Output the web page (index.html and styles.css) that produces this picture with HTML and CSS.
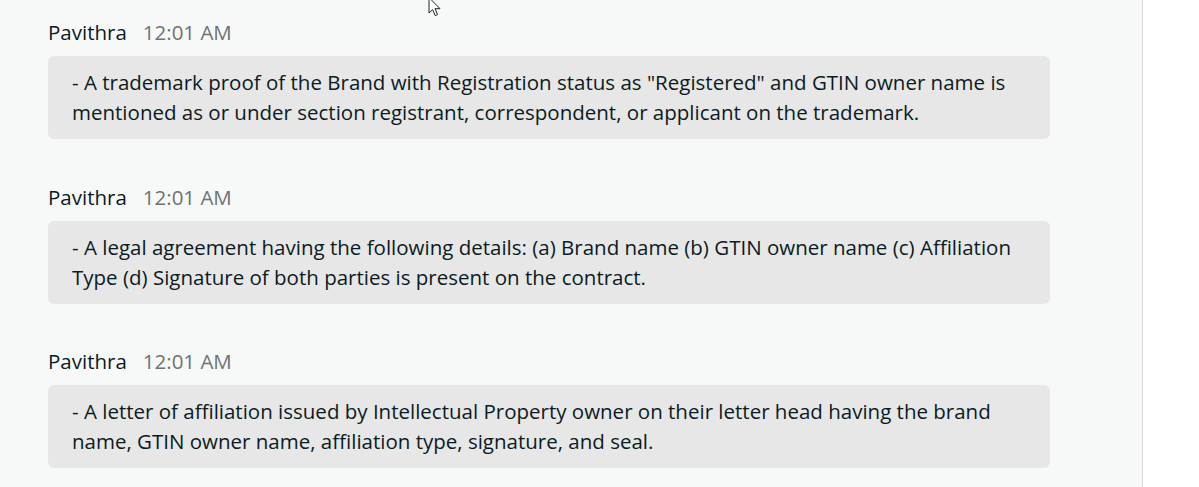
FILE: index.html
```html
<!DOCTYPE html>
<html lang="en">
<head>
<meta charset="utf-8">
<title>Messages</title>
<link rel="stylesheet" href="styles.css">
</head>
<body>
<div class="layout">
  <main class="thread">
    <section class="message">
      <div class="meta"><span class="author">Pavithra</span><span class="time">12:01 AM</span></div>
      <div class="bubble">- A trademark proof of the Brand with Registration status as "Registered" and GTIN owner name is<br>mentioned as or under section registrant, correspondent, or applicant on the trademark.</div>
    </section>
    <section class="message">
      <div class="meta"><span class="author">Pavithra</span><span class="time">12:01 AM</span></div>
      <div class="bubble">- A legal agreement having the following details: (a) Brand name (b) GTIN owner name (c) Affiliation<br>Type (d) Signature of both parties is present on the contract.</div>
    </section>
    <section class="message">
      <div class="meta"><span class="author">Pavithra</span><span class="time">12:01 AM</span></div>
      <div class="bubble">- A letter of affiliation issued by Intellectual Property owner on their letter head having the brand<br>name, GTIN owner name, affiliation type, signature, and seal.</div>
    </section>
  </main>
  <aside class="side"></aside>
</div>
<svg class="cursor" width="14" height="22" viewBox="0 0 14 22" xmlns="http://www.w3.org/2000/svg">
  <path d="M1 0.5 L1 16 L4.6 12.6 L7.2 18.6 L9.6 17.6 L7 11.7 L12 11.7 Z" fill="#fff" stroke="#222" stroke-width="1" stroke-linejoin="round"/>
</svg>
</body>
</html>
```
FILE: styles.css
```css
html, body {
  margin: 0;
  padding: 0;
  height: 100%;
}
body {
  font-family: "Open Sans", "Noto Sans", sans-serif;
  color: #0c1b1f;
  background: #fff;
  overflow: hidden;
}
.layout {
  display: flex;
  height: 100%;
}
.thread {
  width: 1143px;
  flex: none;
  background: #f7f8f8;
  border-right: 1px solid #d5d9d9;
  padding: 20px 0 0 48px;
  box-sizing: border-box;
  display: flex;
  flex-direction: column;
  gap: 45.5px;
}
.side {
  flex: 1;
  background: #fff;
}
.meta {
  display: flex;
  align-items: center;
  gap: 16px;
  height: 24px;
  margin-bottom: 12px;
  font-size: 20.5px;
}
.author {
  color: #0c1b1f;
}
.time {
  color: #6f7373;
}
.bubble {
  width: 1002px;
  box-sizing: border-box;
  background: #e6e7e6;
  border-radius: 6px;
  padding: 11px 24px 12px;
  font-size: 20.5px;
  line-height: 30px;
  white-space: nowrap;
}
.cursor {
  position: absolute;
  left: 428px;
  top: -3px;
}
```
